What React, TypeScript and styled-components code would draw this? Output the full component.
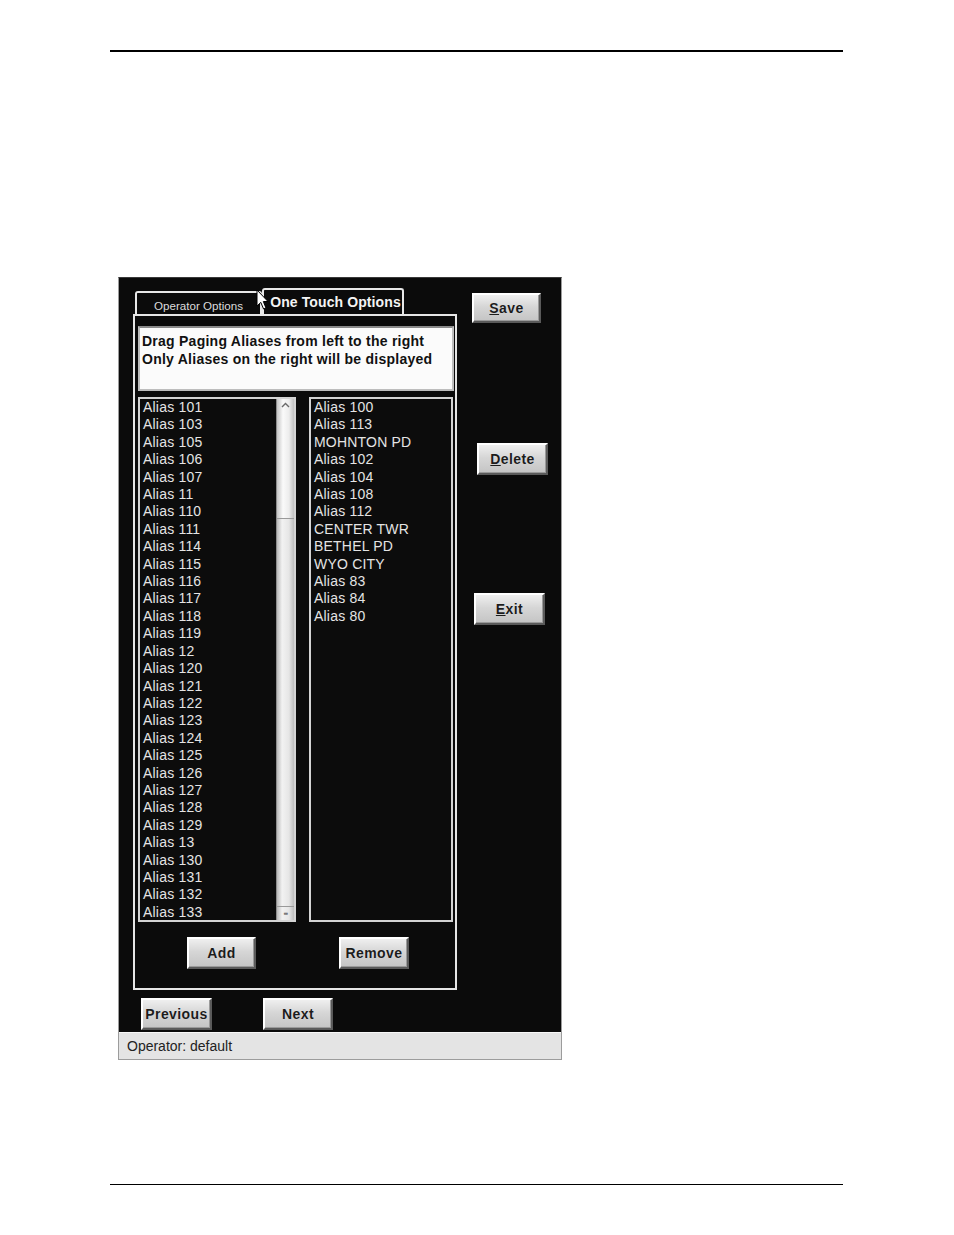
import React from "react";
import styled, { createGlobalStyle } from "styled-components";

const Global = createGlobalStyle`
  html, body { margin: 0; padding: 0; background: #ffffff; }
  body { font-family: "Liberation Sans", Arial, sans-serif; }
  * { box-sizing: border-box; }
`;

const Page = styled.div`
  width: 954px;
  height: 1235px;
  padding-top: 50px;
  display: flex;
  flex-direction: column;
  overflow: hidden;
`;

const Rule = styled.div<{ $thick: number; $top: number }>`
  margin-left: 110px;
  margin-top: ${(p) => p.$top}px;
  width: 733px;
  height: ${(p) => p.$thick}px;
  background: #000;
  flex: none;
`;

const Dialog = styled.div`
  margin-left: 118px;
  margin-top: 225px;
  width: 444px;
  height: 783px;
  border: 1px solid #9c9c9c;
  border-top-color: #3a3a3a;
  background: #0b0b0b;
  display: flex;
  flex-direction: column;
  flex: none;
`;

const Body = styled.div`
  flex: 1;
  display: flex;
  padding: 10px 0 0 14px;
`;

const LeftCol = styled.div`
  width: 324px;
  display: flex;
  flex-direction: column;
`;

const TabRow = styled.div`
  position: relative;
  height: 26px;
  display: flex;
  align-items: flex-end;
`;

const Tab = styled.div<{ $active?: boolean }>`
  height: ${(p) => (p.$active ? 26 : 23)}px;
  width: ${(p) => (p.$active ? 142 : 127)}px;
  margin-left: ${(p) => (p.$active ? 0 : 2)}px;
  border: 2px solid #e8e8e8;
  border-bottom: none;
  border-radius: 3px 3px 0 0;
  background: #0b0b0b;
  color: ${(p) => (p.$active ? "#f4f4f4" : "#dcdcdc")};
  font-size: ${(p) => (p.$active ? 14 : 11.6)}px;
  font-weight: ${(p) => (p.$active ? 700 : 400)};
  letter-spacing: ${(p) => (p.$active ? 0.1 : 0)}px;
  display: flex;
  align-items: center;
  justify-content: center;
  padding-top: ${(p) => (p.$active ? 0 : 3)}px;
  padding-left: ${(p) => (p.$active ? 5 : 0)}px;
`;

const Cursor = styled.svg`
  position: absolute;
  left: 123px;
  top: 1px;
`;

const Panel = styled.div`
  height: 676px;
  border: 2px solid #e6e6e6;
  padding: 10px 1px 0 3px;
  display: flex;
  flex-direction: column;
`;

const Instruction = styled.div`
  height: 65px;
  background: #fbfbfb;
  border: 2px solid #bdbdbd;
  border-top-color: #8a8a8a;
  padding: 4px 0 0 2px;
  color: #111;
  font-size: 14px;
  font-weight: 700;
  line-height: 18px;
  letter-spacing: 0.25px;
`;

const Lists = styled.div`
  margin-top: 6px;
  height: 525px;
  display: flex;
  gap: 13px;
`;

const ListBox = styled.div<{ $w: number }>`
  width: ${(p) => p.$w}px;
  height: 100%;
  border: 2px solid #d4d4d4;
  background: #0c0c0c;
  display: flex;
  overflow: hidden;
`;

const Items = styled.div`
  flex: 1;
  padding-left: 3px;
  overflow: hidden;
`;

const Item = styled.div`
  height: 17.41px;
  line-height: 17.41px;
  font-size: 14px;
  color: #e4e4e4;
  white-space: nowrap;
  letter-spacing: 0.2px;
`;

const ScrollBar = styled.div`
  width: 18px;
  height: 100%;
  background: linear-gradient(90deg, #b8b8b8 0%, #f2f2f2 30%, #e6e6e6 70%, #bcbcbc 100%);
  border-left: 1px solid #8c8c8c;
  display: flex;
  flex-direction: column;
  justify-content: space-between;
  align-items: center;
`;

const Thumb = styled.div`
  width: 100%;
  height: 120px;
  display: flex;
  justify-content: center;
  padding-top: 3px;
  background: linear-gradient(90deg, #c4c4c4 0%, #fafafa 35%, #ededed 70%, #c0c0c0 100%);
  border-bottom: 1px solid #9a9a9a;
`;

const Grip = styled.div`
  width: 100%;
  height: 14px;
  border-top: 1px solid #9a9a9a;
  display: flex;
  justify-content: center;
  align-items: center;
  font-size: 8px;
  color: #777;
  letter-spacing: -1px;
`;

const ButtonRow = styled.div`
  margin-top: 15px;
  display: flex;
`;

const Btn = styled.button<{ $w: number; $ml?: number; $mt?: number; $h?: number }>`
  width: ${(p) => p.$w}px;
  height: ${(p) => p.$h ?? 32}px;
  margin-left: ${(p) => p.$ml ?? 0}px;
  margin-top: ${(p) => p.$mt ?? 0}px;
  flex: none;
  padding: 0;
  border: 2px solid;
  border-color: #ffffff #5a5a5a #5a5a5a #ffffff;
  background: linear-gradient(180deg, #efefef 0%, #d6d6d6 45%, #c4c4c4 100%);
  box-shadow: inset -1px -1px 0 #9a9a9a;
  color: #1c1c1c;
  font-family: "Liberation Sans", Arial, sans-serif;
  font-size: 14px;
  font-weight: 700;
  letter-spacing: 0.4px;
  text-shadow: 0 0 1px rgba(255, 255, 255, 0.6);
  cursor: default;
`;

const NavRow = styled.div`
  margin-top: 8px;
  display: flex;
`;

const RightCol = styled.div`
  margin-left: 15px;
  display: flex;
  flex-direction: column;
  align-items: flex-start;
`;

const StatusBar = styled.div`
  height: 27px;
  background: #e4e4e4;
  border-top: 1px solid #f8f8f8;
  padding-left: 8px;
  display: flex;
  align-items: center;
  color: #222;
  font-size: 14px;
`;

const leftItems = [
  "101", "103", "105", "106", "107", "11", "110", "111", "114", "115",
  "116", "117", "118", "119", "12", "120", "121", "122", "123", "124",
  "125", "126", "127", "128", "129", "13", "130", "131", "132", "133",
].map((n) => `Alias ${n}`);

const rightItems = [
  "Alias 100", "Alias 113", "MOHNTON PD", "Alias 102", "Alias 104",
  "Alias 108", "Alias 112", "CENTER TWR", "BETHEL PD", "WYO CITY",
  "Alias 83", "Alias 84", "Alias 80",
];

export default function App() {
  return (
    <Page>
      <Global />
      <Rule $thick={2} $top={0} />
      <Dialog>
        <Body>
          <LeftCol>
            <TabRow>
              <Tab>Operator Options</Tab>
              <Tab $active>One Touch Options</Tab>
              <Cursor width="13" height="22" viewBox="0 0 13 22">
                <path
                  d="M1 1 L1 17 L4.8 13.4 L7.6 20 L10 19 L7.3 12.5 L12 12.5 Z"
                  fill="#ffffff"
                  stroke="#000000"
                  strokeWidth="1"
                  strokeLinejoin="round"
                />
              </Cursor>
            </TabRow>
            <Panel>
              <Instruction>
                Drag Paging Aliases from left to the right
                <br />
                Only Aliases on the right will be displayed
              </Instruction>
              <Lists>
                <ListBox $w={158}>
                  <Items>
                    {leftItems.map((t) => (
                      <Item key={t}>{t}</Item>
                    ))}
                  </Items>
                  <ScrollBar>
                    <Thumb>
                      <svg width="9" height="6" viewBox="0 0 9 6">
                        <path d="M1 5 L4.5 1.5 L8 5" fill="none" stroke="#6a6a6a" strokeWidth="1.4" />
                      </svg>
                    </Thumb>
                    <Grip>▪▪</Grip>
                  </ScrollBar>
                </ListBox>
                <ListBox $w={144}>
                  <Items>
                    {rightItems.map((t) => (
                      <Item key={t}>{t}</Item>
                    ))}
                  </Items>
                </ListBox>
              </Lists>
              <ButtonRow>
                <Btn $w={69} $ml={49}>Add</Btn>
                <Btn $w={70} $ml={83}>Remove</Btn>
              </ButtonRow>
            </Panel>
            <NavRow>
              <Btn $w={71} $ml={8}>Previous</Btn>
              <Btn $w={70} $ml={51}>Next</Btn>
            </NavRow>
          </LeftCol>
          <RightCol>
            <Btn $w={69} $h={30} $mt={5}>
              <u>S</u>ave
            </Btn>
            <Btn $w={71} $ml={5} $mt={120}>
              <u>D</u>elete
            </Btn>
            <Btn $w={71} $ml={2} $mt={118}>
              <u>E</u>xit
            </Btn>
          </RightCol>
        </Body>
        <StatusBar>Operator: default</StatusBar>
      </Dialog>
      <Rule $thick={1} $top={124} />
    </Page>
  );
}
